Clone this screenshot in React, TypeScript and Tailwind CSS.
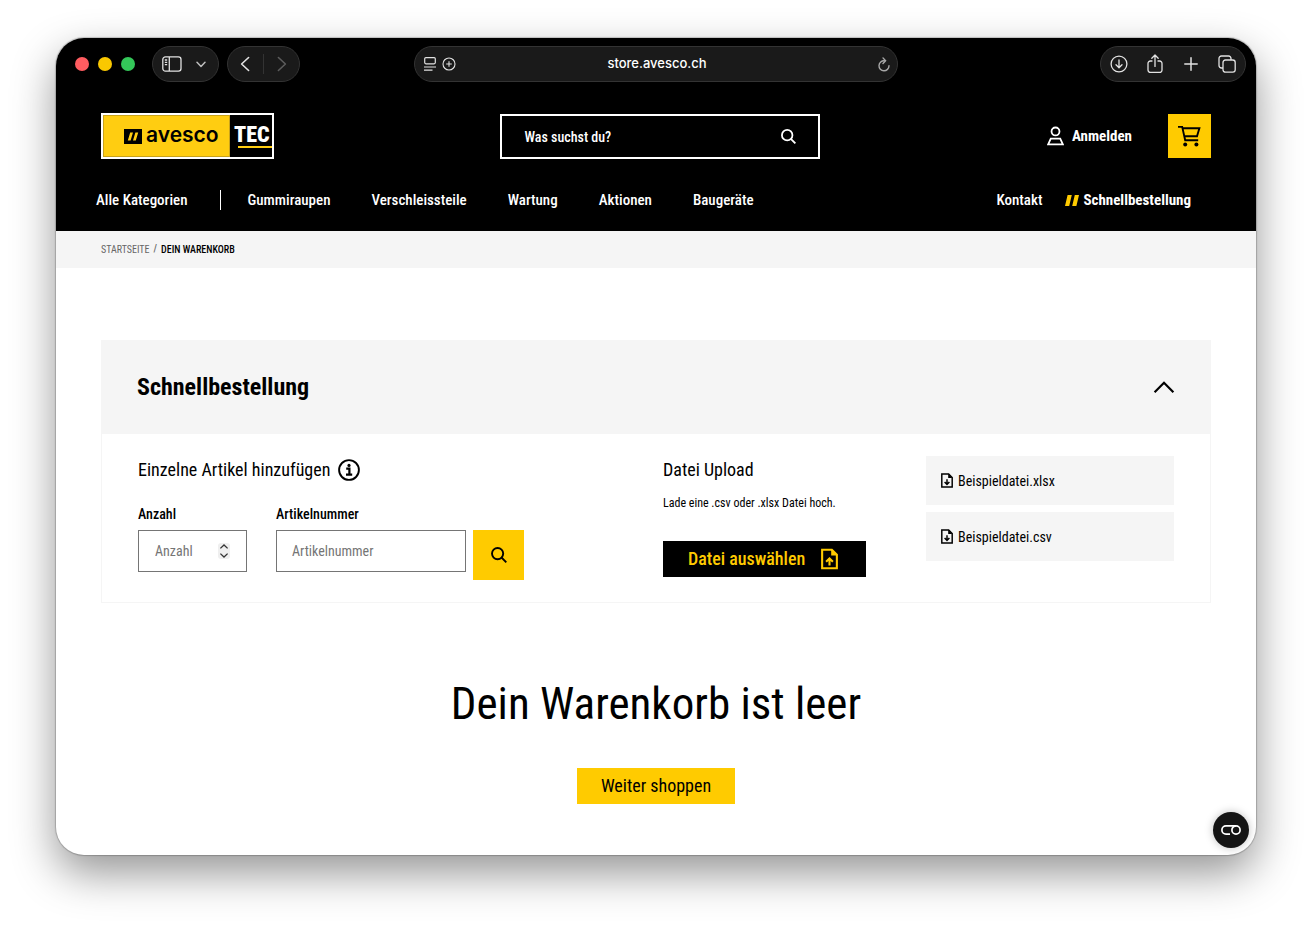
import type { ReactNode } from "react";

const categories = ["Gummiraupen", "Verschleissteile", "Wartung", "Aktionen", "Baugeräte"];
const sampleFiles = ["Beispieldatei.xlsx", "Beispieldatei.csv"];

function ToolbarPill({ className, children }: { className: string; children: ReactNode }) {
  return (
    <div className={`h-9 items-center rounded-full border border-[#333333] bg-[#1a1a1a] ${className}`}>
      {children}
    </div>
  );
}

function SearchIcon({ className }: { className: string }) {
  return (
    <svg viewBox="0 0 16 16" className={className} fill="none" stroke="currentColor" strokeWidth="1.9" aria-hidden="true">
      <circle cx="6.6" cy="6.6" r="5.6" />
      <path d="M10.5 10.5 15.3 15.3" />
    </svg>
  );
}

function FileIcon({ className, direction }: { className: string; direction: "up" | "down" }) {
  return (
    <svg viewBox="0 0 18 22" className={className} fill="none" stroke="currentColor" strokeWidth="2.2" aria-hidden="true">
      <path d="M1.2 1.2H11.5L16.8 6.5V20.8H1.2Z" />
      <path d="M10.8 1V7.2H17Z" fill="currentColor" stroke="none" />
      {direction === "up" ? <path d="M9 18V10.6M5.4 14 9 10.4 12.6 14" /> : <path d="M9 9V16.6M5.4 13.2 9 16.8 12.6 13.2" />}
    </svg>
  );
}

function BrowserBar() {
  return (
    <div className="grid grid-cols-[1fr_484px_1fr] items-center pt-2 text-[#e2e2e2]">
      <div className="flex items-center pl-[19px]">
        <div className="flex gap-[9px]">
          <span className="size-3.5 rounded-full bg-[#ff5c60]" />
          <span className="size-3.5 rounded-full bg-[#fac800]" />
          <span className="size-3.5 rounded-full bg-[#34c759]" />
        </div>
        <ToolbarPill className="ml-[17px] flex w-[67px] justify-between pr-3 pl-[9px]">
          <button aria-label="Seitenleiste">
            <svg viewBox="0 0 20 16" className="h-4 w-5" fill="none" stroke="currentColor" strokeWidth="1.3">
              <rect x="0.8" y="0.9" width="18.2" height="14.2" rx="2.6" />
              <path d="M7.3 1V15M2.8 4H5.2M2.8 6.3H5.2M2.8 8.6H5.2" />
            </svg>
          </button>
          <button aria-label="Tabgruppen">
            <svg viewBox="0 0 10 7" className="h-[7px] w-2.5" fill="none" stroke="#bdbdbd" strokeWidth="1.5" strokeLinecap="round" strokeLinejoin="round">
              <path d="M1 1.2 5 5.4 9 1.2" />
            </svg>
          </button>
        </ToolbarPill>
        <ToolbarPill className="ml-2 flex w-[73px] justify-between px-3">
          <button aria-label="Zurück">
            <svg viewBox="0 0 10 16" className="h-4 w-2.5" fill="none" stroke="currentColor" strokeWidth="1.6" strokeLinecap="round" strokeLinejoin="round">
              <path d="M8.6 1.5 1.6 8 8.6 14.5" />
            </svg>
          </button>
          <span className="h-5 w-px bg-[#333333]" />
          <button aria-label="Vorwärts">
            <svg viewBox="0 0 10 16" className="h-4 w-2.5" fill="none" stroke="#5c5c5c" strokeWidth="1.6" strokeLinecap="round" strokeLinejoin="round">
              <path d="M1.4 1.5 8.4 8 1.4 14.5" />
            </svg>
          </button>
        </ToolbarPill>
      </div>
      <ToolbarPill className="flex pr-[7px] pl-[9px]">
        <svg viewBox="0 0 12 14" className="h-3.5 w-3" fill="none" stroke="currentColor" strokeWidth="1.2" aria-hidden="true">
          <rect x="0.7" y="0.6" width="10.6" height="6.2" rx="1.2" />
          <path d="M0 10H12M0 13.2H8.5" />
        </svg>
        <svg viewBox="0 0 14 14" className="ml-1.5 size-3.5" fill="none" stroke="currentColor" strokeWidth="1.1" aria-hidden="true">
          <circle cx="7" cy="7" r="6" />
          <path d="M7 4.2V9.8M4.2 7H9.8" />
        </svg>
        <span className="flex-1 pr-5 text-center font-['Inter',sans-serif] text-[13px] font-medium text-white">store.avesco.ch</span>
        <button aria-label="Neu laden">
          <svg viewBox="0 0 12 15" className="h-[15px] w-3" fill="none" stroke="#a8a8a8" strokeWidth="1.4" strokeLinecap="round">
            <path d="M6.4 3.8A5 5 0 1 0 11 8.8" />
            <path d="M5 0.9 7.6 3.8 5 6.5" />
          </svg>
        </button>
      </ToolbarPill>
      <div className="flex justify-end pr-2.5">
        <ToolbarPill className="grid w-[146px] grid-cols-4 justify-items-center">
          <button aria-label="Downloads">
            <svg viewBox="0 0 18 18" className="size-[18px]" fill="none" stroke="currentColor" strokeWidth="1.3" strokeLinecap="round" strokeLinejoin="round">
              <circle cx="9" cy="9" r="7.9" />
              <path d="M9 5V12.6M6 9.8 9 12.8 12 9.8" />
            </svg>
          </button>
          <button aria-label="Teilen">
            <svg viewBox="0 0 16 20" className="h-5 w-4" fill="none" stroke="currentColor" strokeWidth="1.3" strokeLinecap="round" strokeLinejoin="round">
              <path d="M5 7H3.4A2.4 2.4 0 0 0 1 9.4V16A2.4 2.4 0 0 0 3.4 18.4H12.6A2.4 2.4 0 0 0 15 16V9.4A2.4 2.4 0 0 0 12.6 7H11M8 12.4V1.2M4.8 4.2 8 1 11.2 4.2" />
            </svg>
          </button>
          <button aria-label="Neuer Tab">
            <svg viewBox="0 0 14 14" className="size-3.5" fill="none" stroke="currentColor" strokeWidth="1.5" strokeLinecap="round">
              <path d="M7 0.8V13.2M0.8 7H13.2" />
            </svg>
          </button>
          <button aria-label="Tabübersicht">
            <svg viewBox="0 0 18 18" className="size-[18px]" fill="none" stroke="currentColor" strokeWidth="1.3">
              <rect x="5" y="5" width="12.2" height="12.2" rx="2.4" />
              <path d="M5 13H3.4A2.4 2.4 0 0 1 1 10.6V3.4A2.4 2.4 0 0 1 3.4 1H10.6A2.4 2.4 0 0 1 13 3.4V5" />
            </svg>
          </button>
        </ToolbarPill>
      </div>
    </div>
  );
}

function Logo() {
  return (
    <a href="#" className="flex h-[46px] w-[173px] border-2 border-white bg-black">
      <span className="flex w-[127px] items-center gap-1 border border-[#c9a21a] bg-[#ffcd11] pl-5 text-black">
        <svg viewBox="0 0 18 15" className="h-[15px] w-[18px]" aria-hidden="true">
          <path d="M0 0H18V15H0Z" />
          <path d="M6.2 3.4H9L6.6 11.4H3.8ZM11.4 3.4H14.2L11.8 11.4H9Z" fill="#ffcd11" />
        </svg>
        <span className="pb-0.5 font-['Inter',sans-serif] text-[21px] leading-6 font-semibold">avesco</span>
      </span>
      <span className="flex flex-1 flex-col justify-end pb-[9px] pl-1 text-white">
        <span className="text-[22px] leading-[22px] font-black">TEC</span>
        <span className="ml-1 h-0.5 bg-[#ffcd11]" />
      </span>
    </a>
  );
}

function ShopHeader() {
  return (
    <header className="px-[45px] pt-[31px] text-[15px]">
      <div className="flex items-center justify-between">
        <Logo />
        <form className="flex h-[45px] w-80 items-center self-end border-2 border-white px-[22px]">
          <input
            type="search"
            aria-label="Suche"
            placeholder="Was suchst du?"
            className="min-w-0 flex-1 text-sm font-medium text-white outline-none placeholder:text-white"
          />
          <button type="button" aria-label="Suchen">
            <SearchIcon className="size-[15px] text-white" />
          </button>
        </form>
        <div className="flex items-center">
          <a href="#" className="flex items-center gap-2 font-bold">
            <svg viewBox="0 0 18 20" className="h-5 w-[17px]" fill="none" stroke="currentColor" strokeWidth="1.9" aria-hidden="true">
              <circle cx="9" cy="5.2" r="4.2" />
              <path d="M4 12.8H14L16.8 18.9H1.2Z" />
            </svg>
            Anmelden
          </a>
          <a href="#" aria-label="Warenkorb" className="ml-9 flex h-11 w-[43px] items-center justify-center bg-[#ffcb00] text-black">
            <svg viewBox="0 0 24 22" className="h-[22px] w-6" fill="none" stroke="currentColor" strokeWidth="1.9" aria-hidden="true">
              <path d="M1 1.9H5.2L8.2 15.2H21.2M5.4 3.2H22.4L20 11.3H7.4" />
              <circle cx="8.2" cy="19.4" r="2" fill="currentColor" stroke="none" />
              <circle cx="19.4" cy="19.4" r="2" fill="currentColor" stroke="none" />
            </svg>
          </a>
        </div>
      </div>
      <nav className="mt-[25px] -ml-[5px] flex h-8 items-center pr-5 font-medium">
        <a href="#">Alle Kategorien</a>
        <span className="mr-[26px] ml-[33px] h-5 w-px bg-white" />
        <div className="flex gap-[41px]">
          {categories.map((name) => (
            <a key={name} href="#">
              {name}
            </a>
          ))}
        </div>
        <a href="#" className="ml-auto">
          Kontakt
        </a>
        <a href="#" className="ml-[23px] flex items-center gap-1 font-bold">
          <svg viewBox="0 0 14 11" className="h-[11px] w-3.5" fill="#ffcb00" aria-hidden="true">
            <path d="M2.6 0H6.8L4.2 11H0ZM9.8 0H14L11.4 11H7.2Z" />
          </svg>
          Schnellbestellung
        </a>
      </nav>
    </header>
  );
}

function QuickOrder() {
  return (
    <section className="border border-[#f5f5f5]">
      <div className="flex h-[93px] items-center justify-between bg-[#f5f5f5] px-[35px] pb-0.5">
        <h2 className="text-2xl font-bold">Schnellbestellung</h2>
        <button aria-label="Zuklappen">
          <svg viewBox="0 0 22 12" className="h-3 w-[22px]" fill="none" stroke="currentColor" strokeWidth="2.2">
            <path d="M1.6 11.2 11 1.8 20.4 11.2" />
          </svg>
        </button>
      </div>
      <div className="flex px-9 pt-[22px] pb-[22px]">
        <div className="flex-1">
          <div className="flex h-7 items-center gap-2">
            <h3 className="text-lg">Einzelne Artikel hinzufügen</h3>
            <button aria-label="Information">
              <svg viewBox="0 0 22 22" className="size-[22px]" fill="none" stroke="currentColor" aria-hidden="true">
                <circle cx="11" cy="11" r="9.9" strokeWidth="1.9" />
                <path d="M8.2 9.6H11.4V15.4M8 15.6H14.2" strokeWidth="2.2" />
                <circle cx="11" cy="6.4" r="1.6" fill="currentColor" stroke="none" />
              </svg>
            </button>
          </div>
          <form className="mt-5 flex items-start">
            <div className="flex w-[109px] flex-col gap-1.5">
              <label htmlFor="quantity" className="text-sm leading-5 font-medium">
                Anzahl
              </label>
              <div className="relative">
                <input
                  id="quantity"
                  type="number"
                  placeholder="Anzahl"
                  className="h-[42px] w-full [appearance:textfield] border border-[#757575] px-4 text-sm placeholder:text-[#757575]"
                />
                <svg viewBox="0 0 12 16" className="absolute top-[13px] right-[17px] h-4 w-3" fill="none" aria-hidden="true">
                  <rect width="12" height="16" rx="3" fill="#efefef" />
                  <path d="M2.4 5.4 6 2 9.6 5.4M2.4 10.6 6 14 9.6 10.6" stroke="#333333" strokeWidth="1.3" />
                </svg>
              </div>
            </div>
            <div className="ml-[29px] flex w-[190px] flex-col gap-1.5">
              <label htmlFor="article" className="text-sm leading-5 font-medium">
                Artikelnummer
              </label>
              <input
                id="article"
                type="text"
                placeholder="Artikelnummer"
                className="h-[42px] w-full border border-[#757575] px-[15px] text-sm placeholder:text-[#757575]"
              />
            </div>
            <button type="button" aria-label="Artikel suchen" className="mt-[26px] ml-[7px] flex h-[50px] w-[51px] items-center justify-center bg-[#ffcb00]">
              <SearchIcon className="size-4" />
            </button>
          </form>
        </div>
        <div className="w-[263px]">
          <h3 className="text-lg">Datei Upload</h3>
          <p className="mt-[9px] text-xs leading-5">Lade eine .csv oder .xlsx Datei hoch.</p>
          <button className="mt-7 flex h-9 w-[203px] items-center justify-between bg-black pr-7 pl-[25px] text-lg font-medium text-[#ffcb00]">
            Datei auswählen
            <FileIcon direction="up" className="h-[22px] w-[17px]" />
          </button>
        </div>
        <div className="flex w-[248px] flex-col gap-[7px]">
          {sampleFiles.map((name) => (
            <a key={name} href="#" className="flex h-[49px] items-center gap-[5px] bg-[#f5f5f5] pl-[15px] text-sm">
              <FileIcon direction="down" className="h-[15px] w-3" />
              {name}
            </a>
          ))}
        </div>
      </div>
    </section>
  );
}

export default function App() {
  return (
    <div className="bg-white px-14 pt-[38px] pb-[74px] font-['Roboto_Condensed','Liberation_Sans_Narrow',Roboto,sans-serif] text-base text-black">
      <div className="relative overflow-hidden rounded-[28px] bg-white shadow-[0_0_1px_1px_rgba(0,0,0,0.2),0_18px_44px_rgba(0,0,0,0.42)]">
        <div className="bg-black pb-[15px] text-white">
          <BrowserBar />
          <ShopHeader />
        </div>
        <nav aria-label="Brotkrumen" className="flex h-[37px] items-center gap-1 bg-[#f5f5f5] px-[45px] text-[10px] font-medium uppercase">
          <a href="#" className="font-normal text-[#666666]">
            Startseite
          </a>
          <span className="pb-0.5 text-[#666666]">/</span>
          <span>Dein Warenkorb</span>
        </nav>
        <main className="px-[45px] pt-[72px] pb-[51px]">
          <QuickOrder />
          <div className="mt-[71px] flex flex-col items-center">
            <h1 className="text-[45px] leading-[60px]">Dein Warenkorb ist leer</h1>
            <a href="#" className="mt-[34px] flex h-9 w-[158px] items-center justify-center bg-[#ffcb00] text-lg">
              Weiter shoppen
            </a>
          </div>
        </main>
        <button aria-label="Cookie-Einstellungen" className="absolute right-[7px] bottom-[7px] flex size-9 items-center justify-center rounded-full bg-[#141414] shadow-[0_0_8px_rgba(0,0,0,0.25)]">
          <svg viewBox="0 0 20 10" className="h-2.5 w-5" fill="none" stroke="white" strokeWidth="1.7">
            <path d="M9 9.1H5A4.1 4.1 0 0 1 5 0.9H15" />
            <circle cx="15" cy="5" r="4.1" />
          </svg>
        </button>
      </div>
    </div>
  );
}
